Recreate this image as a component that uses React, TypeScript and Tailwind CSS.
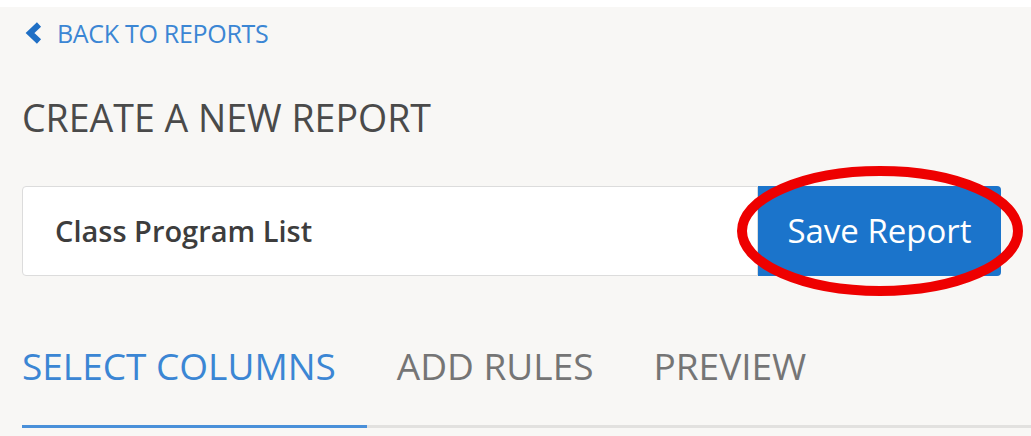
import React from "react";

export default function App() {
  return (
    <div className="w-[1031px] h-[436px] overflow-hidden bg-[#f8f7f5] flex flex-col" style={{ fontFamily: '"Open Sans", sans-serif' }}>
      <div className="h-[7px] bg-white shrink-0" />
      <div className="pl-[22px] pt-[14px] flex items-center gap-[14px] text-[#3b86d4]">
        <svg width="18" height="22" viewBox="0 0 18 22" className="ml-[3px]">
          <path d="M14 2.5 L5 11 L14 19.5" fill="none" stroke="#1f6fc5" strokeWidth="6" strokeLinejoin="miter" />
        </svg>
        <span className="text-[25px] leading-[24px] tracking-[-0.3px]">BACK TO REPORTS</span>
      </div>
      <div className="pl-[22px] mt-[55px] text-[37.5px] leading-[36px] text-[#4a4a4a]">CREATE A NEW REPORT</div>
      <div className="pl-[22px] mt-[50px] relative flex w-[1001px] shrink-0">
        <div className="flex-1 h-[90px] bg-white border border-[#dcdcdc] rounded-l-[4px] flex items-center pl-[32px] text-[29px] font-semibold text-[#3d3d3d]">
          Class Program List
        </div>
        <div className="w-[243px] h-[90px] bg-[#1b74cb] rounded-r-[4px] flex items-center justify-center text-[33px] text-white">
          Save Report
        </div>
        <svg className="absolute left-[736px] top-[-20px]" width="290" height="132" viewBox="0 0 290 132">
          <ellipse cx="144" cy="65" rx="138" ry="60" fill="none" stroke="#ee0000" strokeWidth="10" />
        </svg>
      </div>
      <div className="pl-[22px] mt-[70px] flex items-end">
        <div className="flex flex-col">
          <div className="text-[37px] leading-[40px] text-[#3b86d4] pr-[31px]">SELECT COLUMNS</div>
          <div className="h-[3px] bg-[#4a90d9] mt-[39px]" />
        </div>
        <div className="flex-1 flex flex-col">
          <div className="flex gap-[60px] text-[37px] leading-[40px] text-[#757575] pl-[30px]">
            <span>ADD RULES</span>
            <span>PREVIEW</span>
          </div>
          <div className="h-[3px] bg-[#e2e1df] mt-[39px]" />
        </div>
      </div>
    </div>
  );
}
